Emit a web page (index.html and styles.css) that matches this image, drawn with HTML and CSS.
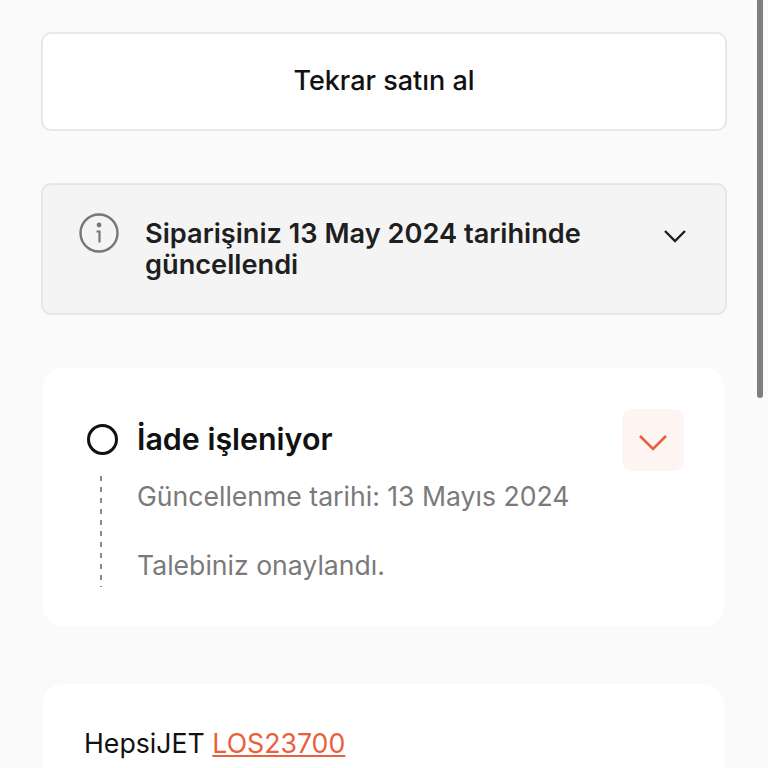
FILE: index.html
```html
<!DOCTYPE html>
<html lang="tr">
<head>
  <meta charset="UTF-8" />
  <meta name="viewport" content="width=device-width, initial-scale=1.0" />
  <title>Sipariş detayı</title>
  <link rel="stylesheet" href="styles.css">
</head>

<body>
  <main class="sayfa">
    <button class="tekrar-btn">Tekrar satın al</button>

    <section class="bilgi-kutu">
      <svg class="bilgi-ikon" width="40" height="40" viewBox="0 0 40 40" fill="none">
        <circle cx="20" cy="20" r="18.5" stroke="#777" stroke-width="2.4" />
        <circle cx="20" cy="12" r="2.4" fill="#777" />
        <path d="M17.5 18.5h3v11" stroke="#777" stroke-width="2.2" />
      </svg>
      <p class="bilgi-metin">Siparişiniz 13 May 2024 tarihinde güncellendi</p>
      <svg class="bilgi-ok" width="24" height="16" viewBox="0 0 24 16" fill="none">
        <path d="M2 3l10 10L22 3" stroke="#1f1f1f" stroke-width="2.4" />
      </svg>
    </section>

    <section class="kart durum-kart">
      <div class="durum-baslik">
        <span class="durum-daire"></span>
        <h2>İade işleniyor</h2>
      </div>
      <div class="durum-detay">
        <p>Güncellenme tarihi: 13 Mayıs 2024</p>
        <p>Talebiniz onaylandı.</p>
      </div>
      <button class="durum-ac">
        <svg width="32" height="20" viewBox="0 0 32 20" fill="none">
          <path d="M3 3l13 13L29 3" stroke="#e8603c" stroke-width="2.6" />
        </svg>
      </button>
    </section>

    <section class="kart kargo-kart">
      <p>HepsiJET <a href="#">LOS23700</a></p>
    </section>
  </main>

  <div class="kaydirma"></div>
</body>
</html>
```

FILE: styles.css
```css
html, body {
  height: 768px;
  overflow: hidden;
}

body {
  background: #fafafa;
  color: #111;
  font-family: Inter, "Noto Sans", sans-serif;
  margin: 0;
  padding: 0;
}

.sayfa {
  padding: 32px 41px 0;
  display: flex;
  flex-direction: column;
}

.tekrar-btn {
  height: 99px;
  background: #fff;
  border: 2px solid #e8e8e8;
  border-radius: 10px;
  color: #111;
  font-family: inherit;
  font-size: 27px;
  font-weight: 500;
  padding: 0 0 2px;
}

.bilgi-kutu {
  margin-top: 52px;
  height: 132px;
  box-sizing: border-box;
  background: #f4f4f4;
  border: 2px solid #e6e6e6;
  border-radius: 10px;
  padding: 28px 38px 0 36px;
  display: flex;
  align-items: flex-start;
}

.bilgi-ikon {
  flex: none;
}

.bilgi-metin {
  margin: 5px 0 0 26px;
  width: 470px;
  font-size: 27.2px;
  font-weight: 600;
  line-height: 31px;
  color: #1f1f1f;
}

.bilgi-ok {
  flex: none;
  margin: 15px 0 0 auto;
}

.kart {
  background: #fff;
  border-radius: 20px;
  margin: 0 3px 0 2px;
}

.durum-kart {
  position: relative;
  margin-top: 53px;
  height: 258px;
  box-sizing: border-box;
  padding: 51px 44px 0;
}

.durum-baslik {
  display: flex;
  align-items: center;
  gap: 19px;
  height: 40px;
}

.durum-daire {
  width: 31px;
  height: 31px;
  box-sizing: border-box;
  border: 3px solid #111;
  border-radius: 50%;
  flex: none;
}

.durum-baslik h2 {
  margin: 0;
  font-size: 30.4px;
  font-weight: 600;
  color: #111;
}

.durum-detay {
  margin: 17px 0 0 13px;
  padding: 5px 0 0 37px;
  height: 106px;
  background: repeating-linear-gradient(#8a8a8a 0 5px, transparent 5px 11px) left top / 2px 100% no-repeat;
  color: #7a7a7a;
  font-size: 26.6px;
}

.durum-detay p {
  margin: 0 0 38px;
  line-height: 31px;
}

.durum-ac {
  position: absolute;
  top: 41px;
  right: 40px;
  width: 62px;
  height: 62px;
  border: 0;
  border-radius: 10px;
  background: #fef4f1;
  padding: 6px 0 0;
  display: flex;
  align-items: center;
  justify-content: center;
}

.kargo-kart {
  margin-top: 58px;
  height: 84px;
  padding: 44px 41px 0;
  box-sizing: border-box;
  border-radius: 20px 20px 0 0;
}

.kargo-kart p {
  margin: 0;
  font-size: 26.7px;
  line-height: 31px;
  color: #111;
}

.kargo-kart a {
  color: #e8603c;
}

.kaydirma {
  position: absolute;
  top: 0;
  left: 757px;
  width: 6px;
  height: 398px;
  border-radius: 0 0 3px 3px;
  background: #7f7f7f;
}
```
